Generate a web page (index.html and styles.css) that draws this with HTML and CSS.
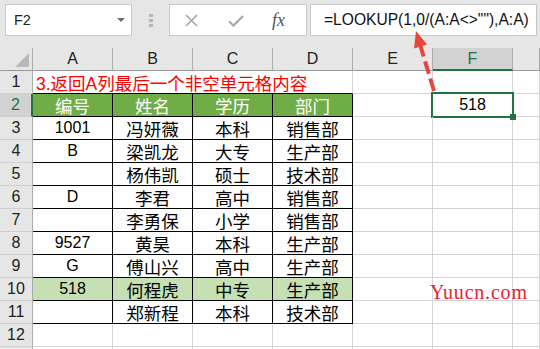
FILE: index.html
```html
<!DOCTYPE html>
<html lang="zh">
<head>
<meta charset="utf-8">
<title>LOOKUP</title>
<link rel="stylesheet" href="styles.css">
</head>
<body>
<div class="app">
  <div class="fbar">
    <div class="namebox"><span class="nb-text">F2</span><span class="nb-arrow"></span></div>
    <div class="grip"><i></i><i></i><i></i></div>
    <div class="fxbox">
      <svg class="ico-x" width="13" height="13" viewBox="0 0 13 13"><path d="M1 1L12 12M12 1L1 12" stroke="#a6a6a6" stroke-width="1.6" fill="none"/></svg>
      <svg class="ico-check" width="16" height="12" viewBox="0 0 16 12"><path d="M1 6.5L5.5 10.5L15 1" stroke="#a6a6a6" stroke-width="2.2" fill="none"/></svg>
      <span class="fx">fx</span>
    </div>
    <div class="formula">=LOOKUP(1,0/(A:A&lt;&gt;""),A:A)</div>
  </div>

  <div class="sheet">
    <div class="corner"><span class="tri"></span></div>
    <div class="ch">A</div><div class="ch">B</div><div class="ch">C</div><div class="ch">D</div><div class="ch">E</div><div class="ch ch-sel">F</div><div class="ch"></div>

    <div class="rh">1</div><div class="c title">3.返回A列最后一个非空单元格内容</div><div class="c"></div><div class="c"></div><div class="c"></div>

    <div class="rh rh-sel">2</div><div class="c t hdr">编号</div><div class="c t hdr">姓名</div><div class="c t hdr">学历</div><div class="c t hdr">部门</div><div class="c"></div><div class="c n sel">518</div><div class="c"></div>

    <div class="rh">3</div><div class="c t n">1001</div><div class="c t">冯妍薇</div><div class="c t">本科</div><div class="c t">销售部</div><div class="c"></div><div class="c"></div><div class="c"></div>

    <div class="rh">4</div><div class="c t n">B</div><div class="c t">梁凯龙</div><div class="c t">大专</div><div class="c t">生产部</div><div class="c"></div><div class="c"></div><div class="c"></div>

    <div class="rh">5</div><div class="c t n"></div><div class="c t">杨伟凯</div><div class="c t">硕士</div><div class="c t">技术部</div><div class="c"></div><div class="c"></div><div class="c"></div>

    <div class="rh">6</div><div class="c t n">D</div><div class="c t">李君</div><div class="c t">高中</div><div class="c t">销售部</div><div class="c"></div><div class="c"></div><div class="c"></div>

    <div class="rh">7</div><div class="c t n"></div><div class="c t">李勇保</div><div class="c t">小学</div><div class="c t">销售部</div><div class="c"></div><div class="c"></div><div class="c"></div>

    <div class="rh">8</div><div class="c t n">9527</div><div class="c t">黄昊</div><div class="c t">本科</div><div class="c t">生产部</div><div class="c"></div><div class="c"></div><div class="c"></div>

    <div class="rh">9</div><div class="c t n">G</div><div class="c t">傅山兴</div><div class="c t">高中</div><div class="c t">生产部</div><div class="c"></div><div class="c"></div><div class="c"></div>

    <div class="rh">10</div><div class="c t n hl">518</div><div class="c t hl">何程虎</div><div class="c t hl">中专</div><div class="c t hl">生产部</div><div class="c"></div><div class="c"></div><div class="c"></div>

    <div class="rh">11</div><div class="c t n"></div><div class="c t">郑新程</div><div class="c t">本科</div><div class="c t">技术部</div><div class="c"></div><div class="c"></div><div class="c"></div>

    <div class="rh">12</div><div class="c"></div><div class="c"></div><div class="c"></div><div class="c"></div><div class="c"></div><div class="c"></div><div class="c"></div>

    <div class="rh"></div><div class="c"></div><div class="c"></div><div class="c"></div><div class="c"></div><div class="c"></div><div class="c"></div><div class="c"></div>
  </div>

  <svg class="arrow" width="540" height="349" viewBox="0 0 540 349">
    <line x1="434" y1="91" x2="420.5" y2="46" stroke="#e5463c" stroke-width="4" stroke-dasharray="13 5"/>
    <polygon points="416,31 427,44.5 414,48.5" fill="#e8453b"/>
  </svg>
  <div class="watermark">Yuucn.com</div>
</div>
</body>
</html>
```
FILE: styles.css
```css
* { box-sizing: border-box; }
html, body { margin: 0; padding: 0; background: #fff; }
body {
  font-family: "Liberation Sans", "Noto Sans CJK SC", sans-serif;
  color: #000;
}
.app {
  position: relative;
  width: 540px;
  height: 349px;
  overflow: hidden;
  background: #fff;
}

/* formula bar */
.fbar {
  height: 48px;
  background: #e6e6e6;
  display: flex;
  align-items: flex-start;
  padding: 4px 3px 0 5px;
}
.namebox {
  width: 127px;
  height: 32px;
  background: #fff;
  border: 1px solid #c8c8c8;
  display: flex;
  align-items: center;
  justify-content: space-between;
  padding: 0 6px 0 8px;
}
.nb-text { font-size: 14.5px; color: #222; }
.nb-arrow {
  width: 0; height: 0;
  border-left: 4px solid transparent;
  border-right: 4px solid transparent;
  border-top: 4px solid #6e6e6e;
}
.grip {
  width: 37px;
  height: 32px;
  display: flex;
  flex-direction: column;
  align-items: center;
  justify-content: center;
  gap: 2px;
}
.grip i { display: block; width: 4px; height: 3px; background: #b4b4b4; }
.fxbox {
  width: 138px;
  height: 32px;
  background: #fff;
  border: 1px solid #c8c8c8;
  display: flex;
  align-items: center;
  padding-left: 15px;
}
.ico-check { margin-left: 30px; margin-top: 2px; }
.fx {
  margin-left: 28px;
  font-family: "Liberation Serif", serif;
  font-style: italic;
  font-size: 18px;
  color: #555;
}
.formula {
  flex: 1;
  height: 32px;
  margin-left: 3px;
  background: #fff;
  border: 1px solid #c8c8c8;
  padding-left: 13px;
  font-size: 15.6px;
  line-height: 30px;
  color: #111;
  white-space: nowrap;
}

/* sheet grid */
.sheet {
  display: grid;
  grid-template-columns: 33px repeat(6, 80px) 1fr;
  grid-auto-rows: 23px;
}
.corner {
  background: #e6e6e6;
  border-right: 1px solid #ababab;
  border-bottom: 1px solid #9b9b9b;
  display: flex;
  justify-content: flex-end;
  align-items: flex-end;
  padding: 0 3px 3px 0;
}
.tri {
  width: 0; height: 0;
  border-left: 14px solid transparent;
  border-bottom: 14px solid #b9b9b9;
}
.ch {
  background: #e6e6e6;
  border-right: 1px solid #ababab;
  border-bottom: 1px solid #9b9b9b;
  font-size: 16px;
  color: #222;
  display: flex;
  align-items: center;
  justify-content: center;
}
.ch-sel {
  background: #d2d2d2;
  color: #217346;
  border-bottom: 2px solid #217346;
}
.rh {
  background: #e6e6e6;
  border-right: 1px solid #ababab;
  border-bottom: 1px solid #d0d0d0;
  font-size: 16px;
  color: #222;
  display: flex;
  align-items: center;
  justify-content: center;
}
.rh-sel {
  background: #d2d2d2;
  color: #217346;
  border-right: 2px solid #217346;
}
.c {
  border-right: 1px solid #d4d4d4;
  border-bottom: 1px solid #d4d4d4;
  font-size: 17.5px;
  display: flex;
  align-items: center;
  justify-content: center;
  white-space: nowrap;
  position: relative;
}
.c.n { font-size: 16px; }
.title {
  grid-column: span 4;
  justify-content: flex-start;
  padding-left: 3px;
  color: #ff0000;
  border-bottom-color: #000;
}
.t { border-right-color: #000; border-bottom-color: #000; }
.hdr { background: #70ad47; color: #fff; }
.hl { background: #c6e0b4; }
.sel::after {
  content: "";
  position: absolute;
  top: -2px; left: -2px; right: -2px; bottom: -2px;
  border: 2px solid #217346;
}
.sel::before {
  content: "";
  position: absolute;
  right: -4px; bottom: -4px;
  width: 6px; height: 6px;
  background: #217346;
  z-index: 1;
}

/* overlays */
.arrow {
  position: absolute;
  left: 0; top: 0;
  pointer-events: none;
}
.watermark {
  position: absolute;
  left: 430px;
  top: 282px;
  font-family: "Liberation Serif", "DejaVu Serif", serif;
  font-size: 20px;
  line-height: 1;
  letter-spacing: 0.8px;
  color: #ec1c2c;
}
```
